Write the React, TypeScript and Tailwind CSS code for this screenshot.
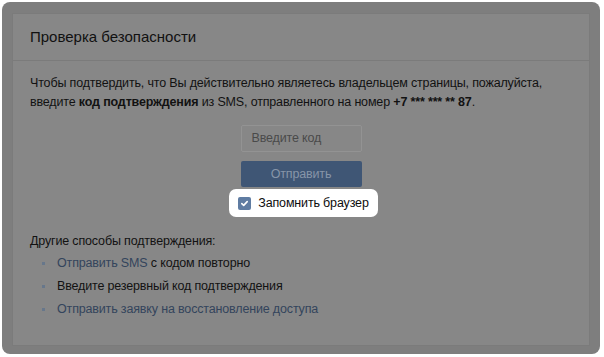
export default function App() {
  const font = { fontFamily: '"Liberation Sans", Arial, sans-serif' }
  return (
    <div className="w-[604px] h-[357px] bg-white p-[2px]" style={font}>
      <div className="h-[352px] w-[598px] rounded-[8px] bg-[#7e7e7e] pt-[11px] px-[10px]">
        <div className="h-[333px] bg-[#878787] border border-[#7b7b7b] text-[#121212]">
          {/* Header */}
          <div className="h-[47px] flex items-center px-[17px] border-b border-[#7b7b7b]">
            <h1 className="text-[15px] text-[#111]">Проверка безопасности</h1>
          </div>

          {/* Body */}
          <div className="px-[17px] pt-[13px] text-[12.5px] tracking-[-0.16px]">
            <p className="leading-[19px] whitespace-nowrap">
              Чтобы подтвердить, что Вы действительно являетесь владельцем страницы, пожалуйста,
              <br />
              введите <b className="font-bold">код подтверждения</b> из SMS, отправленного на номер <b className="font-bold">+7 *** *** ** 87</b>.
            </p>

            <div className="flex flex-col items-center mt-[13px]">
              <div className="w-[121px] h-[27px] border border-[#939393] rounded-[2px] flex items-center px-[10px] text-[#4a4a4a]">
                Введите код
              </div>
              <div className="w-[121px] h-[26px] mt-[9px] rounded-[2px] bg-[#3f5675] flex items-center justify-center text-[#8795a8]">
                Отправить
              </div>
              <div className="mt-[2px] ml-[5px] h-[28px] px-[9px] bg-white rounded-[7px] flex items-center gap-[7px]">
                <div className="w-[13px] h-[13px] rounded-[2px] bg-[#5f7ca2] flex items-center justify-center">
                  <svg width="9" height="9" viewBox="0 0 9 9" fill="none">
                    <path d="M1.8 4.6 L3.7 6.4 L7.2 2.6" stroke="white" strokeWidth="1.6" strokeLinecap="round" strokeLinejoin="round" />
                  </svg>
                </div>
                <span className="text-[#0d0d0d]">Запомнить браузер</span>
              </div>
            </div>

            <p className="leading-[19px] mt-[15px]">Другие способы подтверждения:</p>
            <ul className="mt-[1px] leading-[23px]">
              <li className="flex items-center">
                <span className="w-[3px] h-[3px] bg-[#67778b] ml-[12px] mr-[12px]" />
                <span><span className="text-[#33445c]">Отправить SMS</span> с кодом повторно</span>
              </li>
              <li className="flex items-center">
                <span className="w-[3px] h-[3px] bg-[#67778b] ml-[12px] mr-[12px]" />
                <span>Введите резервный код подтверждения</span>
              </li>
              <li className="flex items-center">
                <span className="w-[3px] h-[3px] bg-[#67778b] ml-[12px] mr-[12px]" />
                <span className="text-[#33445c]">Отправить заявку на восстановление доступа</span>
              </li>
            </ul>
          </div>
        </div>
      </div>
    </div>
  )
}
